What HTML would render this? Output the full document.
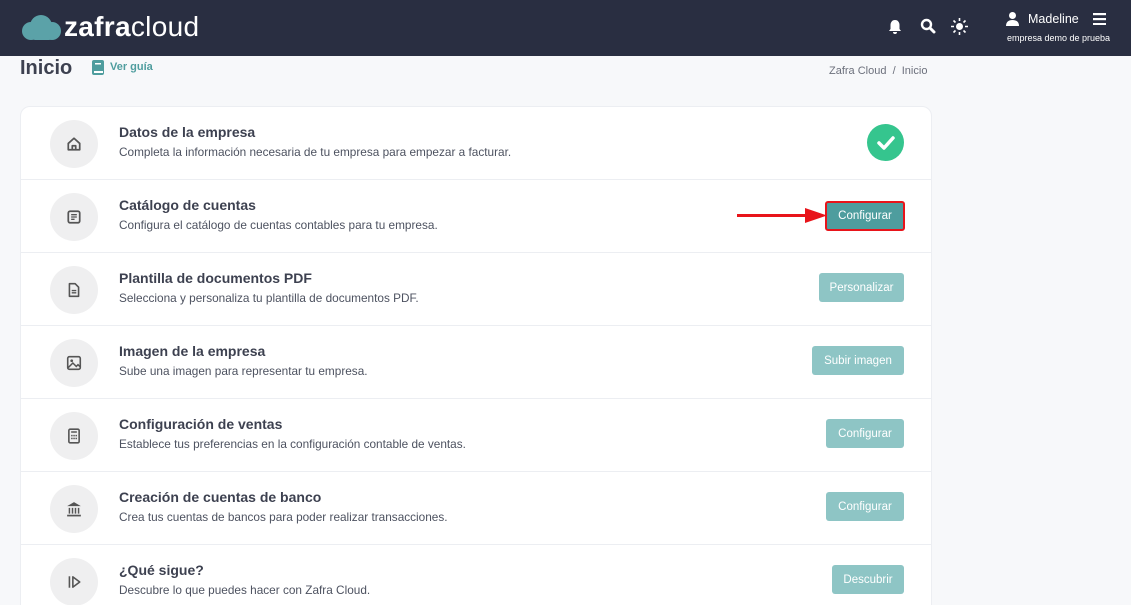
<!DOCTYPE html>
<html><head><meta charset="utf-8"><style>
*{box-sizing:border-box;margin:0;padding:0}
html,body{width:1131px;height:605px;overflow:hidden}
body{background:#f7f8fa;font-family:"Liberation Sans",sans-serif;position:relative}
.hdr{position:absolute;left:0;top:0;width:1131px;height:56px;background:#292e41}
.logo{position:absolute;left:64px;top:11px;color:#fff;font-size:28px;letter-spacing:0.3px}
.logo b{font-weight:700}
.title{position:absolute;left:20px;top:57px;font-size:20px;font-weight:700;color:#3d4150}
.guia{position:absolute;left:110px;top:61px;font-size:11px;font-weight:700;color:#4f9d9e}
.bc{position:absolute;left:829px;top:65px;font-size:11px;color:#6c707c}
.card{position:absolute;left:20px;top:106px;width:912px;height:520px;background:#fff;border:1px solid #eceef2;border-radius:10px}
.row{position:absolute;left:0;width:910px;height:73px;border-bottom:1px solid #eceef2}
.ic{position:absolute;left:29px;top:13px;width:48px;height:48px;border-radius:50%;background:#efeff0;display:flex;align-items:center;justify-content:center}
.t{position:absolute;left:98px;top:17px;font-size:14px;font-weight:700;color:#3d4150}
.d{position:absolute;left:98px;top:38px;font-size:11.8px;color:#4d5260}
.btn{position:absolute;top:20px;height:29px;background:#8ec5c5;color:#fff;font-size:11.5px;border-radius:3px;display:flex;align-items:center;justify-content:center}
</style></head><body>
<div class="hdr">
<svg style="position:absolute;left:21px;top:14px" width="42" height="28" viewBox="0 0 42 28"><g fill="#6cc9cb" opacity=".75"><circle cx="10" cy="17" r="9"/><circle cx="20" cy="12" r="11"/><circle cx="31" cy="17" r="9"/><rect x="9" y="15" width="24" height="11" rx="5"/></g></svg>
<div class="logo"><b>zafra</b>cloud</div>
<svg style="position:absolute;left:888px;top:19px" width="14" height="16" viewBox="0 0 14 16"><path d="M7 1c3 0 4.5 2.5 4.5 5v4l1.5 2H1l1.5-2V6C2.5 3.5 4 1 7 1z M5 13h4a2 2 0 0 1-4 0z" fill="#fff"/></svg>
<svg style="position:absolute;left:920px;top:18px" width="16" height="16" viewBox="0 0 16 16"><circle cx="6.5" cy="6.5" r="4.5" stroke="#fff" stroke-width="2.4" fill="none"/><path d="M10 10l4 4" stroke="#fff" stroke-width="3" stroke-linecap="round"/></svg>
<svg style="position:absolute;left:951px;top:18px" width="17" height="17" viewBox="0 0 17 17"><circle cx="8.5" cy="8.5" r="3.5" fill="#fff"/><g stroke="#fff" stroke-width="1.6"><path d="M8.5 0v3M8.5 14v3M0 8.5h3M14 8.5h3M2.5 2.5l2 2M12.5 12.5l2 2M2.5 14.5l2-2M12.5 4.5l2-2"/></g></svg>
<svg style="position:absolute;left:1006px;top:12px" width="13" height="14" viewBox="0 0 13 14"><circle cx="6.5" cy="3.5" r="3.5" fill="#fff"/><path d="M0 14c0-4 2.5-6 6.5-6s6.5 2 6.5 6z" fill="#fff"/></svg>
<div style="position:absolute;left:1028px;top:12px;color:#fff;font-size:12.5px">Madeline</div>
<svg style="position:absolute;left:1093px;top:13px" width="13" height="12"><g fill="#fff"><rect width="13" height="2.2"/><rect y="5" width="13" height="2.2"/><rect y="10" width="13" height="2.2"/></g></svg>
<div style="position:absolute;left:1007px;top:33px;color:#fff;font-size:9px">empresa demo de prueba</div>
</div>
<div class="title">Inicio</div>
<svg style="position:absolute;left:92px;top:60px" width="12" height="15" viewBox="0 0 12 15"><rect x="0" y="0" width="12" height="15" rx="2" fill="#4f9d9e"/><rect x="2" y="11" width="9" height="2" fill="#fff"/><rect x="3" y="3" width="6" height="1.5" fill="#fff"/></svg>
<div class="guia">Ver guía</div>
<div class="bc">Zafra Cloud &nbsp;/&nbsp; Inicio</div>
<div class="card">
<div class="row" style="top:0"><div class="ic"><svg width="16" height="16" viewBox="0 0 14 14"><path d="M2 6.5L7 2l5 4.5V12H2z M5.5 12V8.5h3V12" fill="none" stroke="#555" stroke-width="1.5" stroke-linejoin="round"/></svg></div><div class="t">Datos de la empresa</div><div class="d">Completa la información necesaria de tu empresa para empezar a facturar.</div>
<div style="position:absolute;left:846px;top:17px;width:37px;height:37px;border-radius:50%;background:#35c58e"><svg width="37" height="37" viewBox="0 0 37 37"><path d="M12 19l5 5 9-10" fill="none" stroke="#fff" stroke-width="3.5" stroke-linecap="round" stroke-linejoin="round"/></svg></div></div>
<div class="row" style="top:73px"><div class="ic"><svg width="16" height="16" viewBox="0 0 14 14"><rect x="2" y="2" width="10" height="10" rx="1.5" fill="none" stroke="#555" stroke-width="1.5"/><path d="M4.5 5h5M4.5 7h5M4.5 9h3" stroke="#555" stroke-width="1.2"/></svg></div><div class="t">Catálogo de cuentas</div><div class="d">Configura el catálogo de cuentas contables para tu empresa.</div>
<div style="position:absolute;left:716px;top:34px;width:78px;height:3px;background:#e8141a"></div>
<svg style="position:absolute;left:784px;top:28px" width="22" height="15"><path d="M0 0L22 7.5 0 15z" fill="#e8141a"/></svg>
<div class="btn" style="left:804px;top:21px;width:80px;height:30px;background:#4e9d9e;border:2.5px solid #e8141a">Configurar</div></div>
<div class="row" style="top:146px"><div class="ic"><svg width="16" height="16" viewBox="0 0 14 14"><path d="M3 1.5h5l3 3v8H3z" fill="none" stroke="#555" stroke-width="1.4" stroke-linejoin="round"/><path d="M5 7.5h4M5 9.5h4" stroke="#555" stroke-width="1.2"/></svg></div><div class="t">Plantilla de documentos PDF</div><div class="d">Selecciona y personaliza tu plantilla de documentos PDF.</div><div class="btn" style="left:798px;width:85px">Personalizar</div></div>
<div class="row" style="top:219px"><div class="ic"><svg width="16" height="16" viewBox="0 0 14 14"><rect x="1.5" y="1.5" width="11" height="11" rx="1.5" fill="none" stroke="#555" stroke-width="1.4"/><circle cx="5" cy="5" r="1.2" fill="#555"/><path d="M2 11l4-4 3 3 1.5-1.5 2 2" fill="none" stroke="#555" stroke-width="1.3"/></svg></div><div class="t">Imagen de la empresa</div><div class="d">Sube una imagen para representar tu empresa.</div><div class="btn" style="left:791px;width:92px">Subir imagen</div></div>
<div class="row" style="top:292px"><div class="ic"><svg width="16" height="16" viewBox="0 0 14 14"><rect x="2.5" y="1" width="9" height="12" rx="1.2" fill="none" stroke="#555" stroke-width="1.4"/><path d="M4.5 3.5h5" stroke="#555" stroke-width="1.3"/><g fill="#555"><rect x="4.5" y="6" width="1.3" height="1.3"/><rect x="6.4" y="6" width="1.3" height="1.3"/><rect x="8.3" y="6" width="1.3" height="1.3"/><rect x="4.5" y="8.5" width="1.3" height="1.3"/><rect x="6.4" y="8.5" width="1.3" height="1.3"/><rect x="8.3" y="8.5" width="1.3" height="1.3"/></g></svg></div><div class="t">Configuración de ventas</div><div class="d">Establece tus preferencias en la configuración contable de ventas.</div><div class="btn" style="left:805px;width:78px">Configurar</div></div>
<div class="row" style="top:365px"><div class="ic"><svg width="16" height="16" viewBox="0 0 14 14"><path d="M1 4.5L7 1l6 3.5z" fill="#555"/><path d="M3 6v5M5.7 6v5M8.3 6v5M11 6v5" stroke="#555" stroke-width="1.3"/><rect x="1" y="12" width="12" height="1.5" fill="#555"/></svg></div><div class="t">Creación de cuentas de banco</div><div class="d">Crea tus cuentas de bancos para poder realizar transacciones.</div><div class="btn" style="left:805px;width:78px">Configurar</div></div>
<div class="row" style="top:438px;border:none"><div class="ic"><svg width="16" height="16" viewBox="0 0 14 14"><path d="M3 2v10" stroke="#555" stroke-width="1.4"/><path d="M6 2.5l6 4.5-6 4.5z" fill="none" stroke="#555" stroke-width="1.4" stroke-linejoin="round"/></svg></div><div class="t">¿Qué sigue?</div><div class="d">Descubre lo que puedes hacer con Zafra Cloud.</div><div class="btn" style="left:811px;width:72px">Descubrir</div></div>
</div>
</body></html>
